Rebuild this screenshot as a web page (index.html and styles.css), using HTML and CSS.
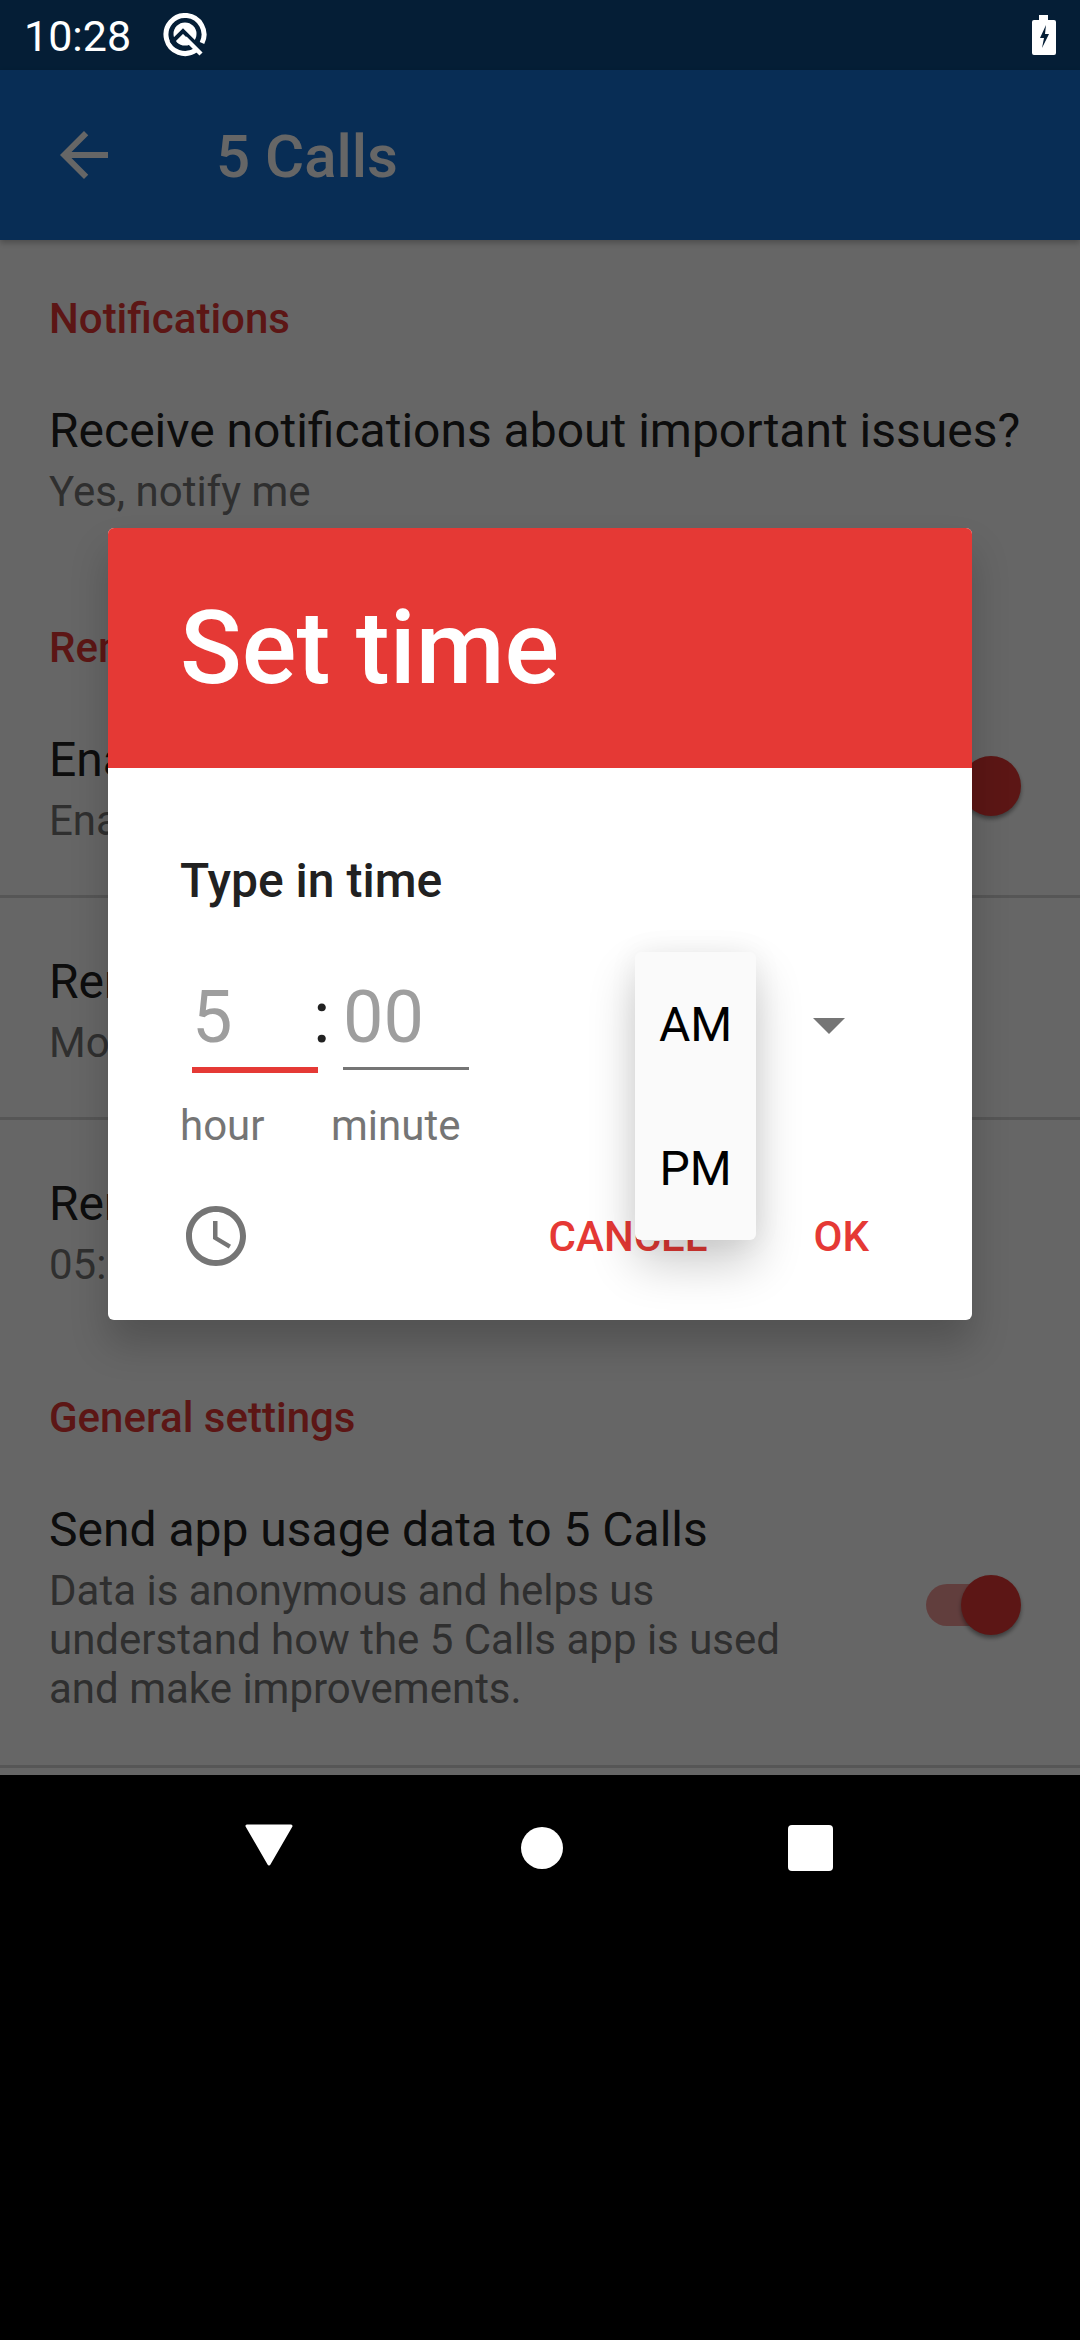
FILE: index.html
```html
<!DOCTYPE html>
<html>
<head>
    <meta charset="utf-8"/>
    <title>5 Calls</title>
    <link rel="stylesheet" href="styles.css">
</head>
<body>

<div id="screen">
    <div class="app">
        <div class="status-bg"></div>
        <div class="toolbar">
            <svg class="back" viewBox="0 0 24 24"><path d="M20 11H7.83l5.59-5.59L12 4l-8 8 8 8 1.41-1.41L7.83 13H20v-2z"/></svg>
            <span class="toolbar-title">5 Calls</span>
        </div>
        <div class="settings">
            <div class="category first">Notifications</div>
            <div class="pref">
                <div class="pref-title">Receive notifications about important issues?</div>
                <div class="pref-sum">Yes, notify me</div>
            </div>
            <div class="category">Reminders</div>
            <div class="pref line with-toggle">
                <div class="pref-text">
                    <div class="pref-title">Enable reminders</div>
                    <div class="pref-sum">Enable daily reminders</div>
                </div>
                <div class="toggle raised"><div class="track"></div><div class="thumb"></div></div>
            </div>
            <div class="pref line">
                <div class="pref-title">Reminder days</div>
                <div class="pref-sum">Mon, Tue, Wed, Thu, Fri</div>
            </div>
            <div class="pref">
                <div class="pref-title">Reminder time</div>
                <div class="pref-sum">05:00 PM</div>
            </div>
            <div class="category general">General settings</div>
            <div class="pref line last with-toggle">
                <div class="pref-text">
                    <div class="pref-title">Send app usage data to 5 Calls</div>
                    <div class="pref-sum">Data is anonymous and helps us understand how the 5 Calls app is used and make improvements.</div>
                </div>
                <div class="toggle raised"><div class="track"></div><div class="thumb"></div></div>
            </div>
        </div>
    </div>

    <div class="scrim"></div>

    <div class="status">
        <span class="clock">10:28</span>
        <svg class="q-logo" viewBox="0 0 44 44">
            <path d="M33 37A19 19 0 1 1 39 30" fill="none" stroke="#fff" stroke-width="5"/>
            <circle cx="22" cy="21" r="11.5" fill="#fff"/>
            <path d="M8 30L20 18L36 34" fill="none" stroke="#051e36" stroke-width="4"/>
            <path d="M22 25L38 41" stroke="#fff" stroke-width="4.5"/>
        </svg>
        <svg class="battery" viewBox="0 0 24 40">
            <path d="M7 0h9v5h6a2 2 0 0 1 2 2v31a2 2 0 0 1-2 2H2a2 2 0 0 1-2-2V7a2 2 0 0 1 2-2h5z" fill="#fff"/>
            <path d="M14 10l-6 13h4l-2 10 7-14h-4z" fill="#051e36"/>
        </svg>
    </div>

    <div class="dialog">
        <div class="dialog-head">Set time</div>
        <div class="dialog-body">
            <div class="dialog-label">Type in time</div>
            <div class="time-row">
                <div class="field hour">
                    <div class="digits active">5</div>
                    <div class="field-label">hour</div>
                </div>
                <div class="colon">:</div>
                <div class="field minute">
                    <div class="digits">00</div>
                    <div class="field-label">minute</div>
                </div>
                <div class="caret"></div>
            </div>
            <div class="dialog-actions">
                <svg class="clock-icon" viewBox="0 0 24 24"><path d="M11.99 2C6.47 2 2 6.48 2 12s4.47 10 9.99 10C17.52 22 22 17.52 22 12S17.52 2 11.99 2zM12 20c-4.42 0-8-3.58-8-8s3.58-8 8-8 8 3.58 8 8-3.58 8-8 8z"/><path d="M12.5 7H11v6l5.25 3.15.75-1.23-4.5-2.67z"/></svg>
                <span class="action cancel">CANCEL</span>
                <span class="action ok">OK</span>
            </div>
        </div>
        <div class="ampm">
            <div class="ampm-item">AM</div>
            <div class="ampm-item">PM</div>
        </div>
    </div>

    <div class="navbar">
        <svg class="nav-back" viewBox="0 0 48 42"><path d="M2 2h44L24 40z" fill="#fff" stroke="#fff" stroke-width="3" stroke-linejoin="round"/></svg>
        <div class="nav-home"></div>
        <div class="nav-recent"></div>
    </div>
</div>

</body>
</html>
```

FILE: styles.css
```css
html, body {
    margin: 0;
    background: #000;
}

body {
    font-family: Roboto, "Liberation Sans", sans-serif;
}

#screen {
    position: relative;
    width: 1080px;
    height: 2340px;
    overflow: hidden;
    background: #000;
}

.app {
    height: 1775px;
    background: #fff;
    overflow: hidden;
}

.status-bg {
    height: 70px;
    background: #0d4c88;
}

.toolbar {
    height: 170px;
    background: #1571d5;
    display: flex;
    align-items: center;
    padding-left: 48px;
    box-sizing: border-box;
    box-shadow: 0 3px 6px rgba(0, 0, 0, 0.25);
}

.back {
    width: 72px;
    height: 72px;
    fill: #fff;
}

.toolbar-title {
    margin: 3px 0 0 96px;
    font-size: 60px;
    font-weight: 500;
    color: #fff;
}

.category {
    margin: 104px 0 0 49px;
    font-size: 42px;
    line-height: 56px;
    font-weight: 500;
    color: #e53935;
}

.category.first {
    margin-top: 51px;
}

.category.general {
    margin-top: 101px;
}

.pref {
    padding: 56px 0 0 49px;
}

.pref.line {
    padding-bottom: 50px;
    border-bottom: 3px solid #d8d8d8;
}

.pref.last {
    padding-bottom: 52px;
}

.with-toggle {
    display: flex;
    align-items: center;
    justify-content: space-between;
    padding-right: 59px;
}

.pref-text {
    width: 760px;
}

.pref-title {
    font-size: 48px;
    line-height: 56px;
    color: #212121;
}

.pref-sum {
    margin-top: 8px;
    font-size: 42px;
    line-height: 49px;
    color: #757575;
}

.toggle {
    position: relative;
    width: 95px;
    height: 60px;
}

.toggle.raised {
    margin-top: -6px;
}

.track {
    position: absolute;
    left: 0;
    top: 9px;
    width: 80px;
    height: 42px;
    border-radius: 21px;
    background: #e53935;
    opacity: 0.5;
}

.thumb {
    position: absolute;
    right: 0;
    top: 0;
    width: 60px;
    height: 60px;
    border-radius: 50%;
    background: #e53935;
    box-shadow: 0 3px 4px rgba(0, 0, 0, 0.4);
}

.scrim {
    position: absolute;
    left: 0;
    top: 0;
    width: 1080px;
    height: 1775px;
    background: rgba(0, 0, 0, 0.6);
}

.status {
    position: absolute;
    left: 0;
    top: 0;
    width: 1080px;
    height: 70px;
    display: flex;
    align-items: center;
    padding: 0 24px;
    box-sizing: border-box;
    color: #fff;
}

.clock {
    font-size: 43px;
    width: 139px;
    padding-top: 2px;
}

.q-logo {
    width: 44px;
    height: 44px;
}

.battery {
    width: 24px;
    height: 40px;
    margin-left: auto;
}

.dialog {
    position: absolute;
    left: 108px;
    top: 528px;
    width: 864px;
    height: 792px;
    background: #fff;
    border-radius: 6px;
    box-shadow: 0 24px 38px rgba(0, 0, 0, 0.2);
}

.dialog-head {
    height: 240px;
    background: #e53935;
    border-radius: 6px 6px 0 0;
    box-sizing: border-box;
    padding: 60px 0 0 72px;
    font-size: 102px;
    line-height: 120px;
    font-weight: 500;
    color: #fff;
}

.dialog-body {
    padding: 85px 72px 0;
}

.dialog-label {
    font-size: 48px;
    line-height: 56px;
    font-weight: 500;
    color: #212121;
}

.time-row {
    display: flex;
    margin-top: 58px;
}

.field.hour {
    width: 138px;
}

.field.minute {
    width: 137px;
}

.digits {
    margin: 0 0 3px 12px;
    width: 126px;
    height: 103px;
    box-sizing: border-box;
    font-size: 72px;
    line-height: 102px;
    color: #9e9e9e;
    border-bottom: 3px solid #757575;
}

.digits.active {
    height: 106px;
    margin-bottom: 0;
    border-bottom: 6px solid #e53935;
}

.field-label {
    padding-top: 28px;
    font-size: 42px;
    line-height: 49px;
    color: #757575;
}

.colon {
    width: 18px;
    margin-left: -5px;
    font-size: 72px;
    line-height: 102px;
    color: #212121;
}

.caret {
    margin: 51px 0 0 345px;
    width: 0;
    height: 0;
    border-left: 16px solid transparent;
    border-right: 16px solid transparent;
    border-top: 16px solid #757575;
}

.dialog-actions {
    display: flex;
    align-items: center;
    margin-top: 50px;
}

.clock-icon {
    width: 72px;
    height: 72px;
    fill: #757575;
}

.action {
    font-size: 42px;
    font-weight: 500;
    color: #e53935;
}

.cancel {
    margin: 0 106px 0 auto;
}

.ok {
    margin-right: 31px;
}

.ampm {
    position: absolute;
    left: 527px;
    top: 424px;
    width: 121px;
    height: 288px;
    background: #fafafa;
    border-radius: 6px;
    box-shadow: 0 24px 48px rgba(0, 0, 0, 0.2), 0 0 30px rgba(0, 0, 0, 0.06);
}

.ampm-item {
    height: 144px;
    line-height: 146px;
    text-align: center;
    font-size: 48px;
    color: #000;
}

.navbar {
    position: absolute;
    left: 0;
    top: 1775px;
    width: 1080px;
    height: 146px;
    display: flex;
    align-items: center;
    justify-content: center;
    gap: 225px;
}

.nav-back {
    width: 48px;
    height: 42px;
    margin: -6px 3px 0 -3px;
}

.nav-home {
    width: 42px;
    height: 42px;
    border-radius: 50%;
    background: #fff;
}

.nav-recent {
    width: 45px;
    height: 46px;
    border-radius: 4px;
    background: #fff;
}
```
